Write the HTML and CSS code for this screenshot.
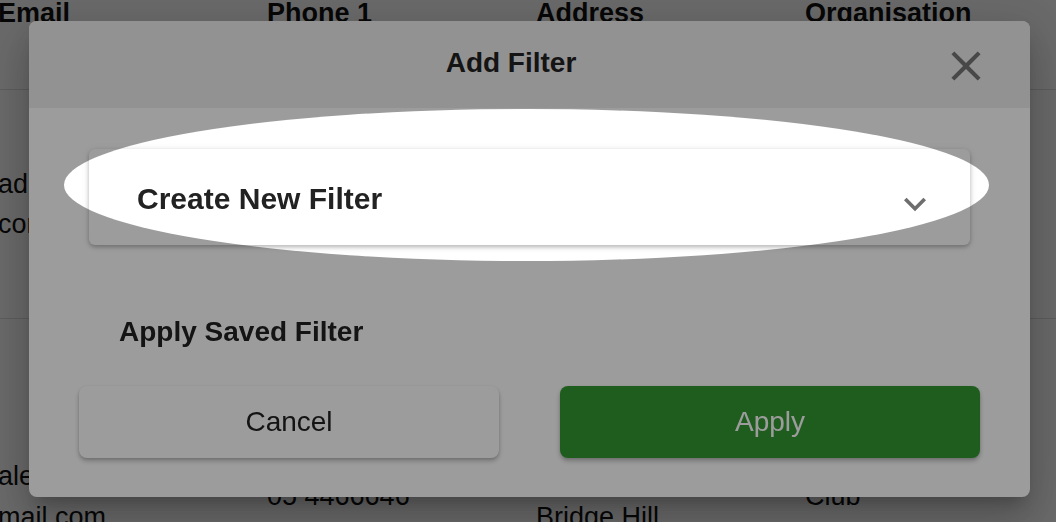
FILE: index.html
```html
<!DOCTYPE html>
<html lang="en">
  <head>
    <meta charset="UTF-8" />
    <meta name="viewport" content="width=device-width, initial-scale=1.0" />
    <title>Contacts</title>
    <link rel="stylesheet" href="styles.css">
  </head>

  <body>
    <table class="contacts">
      <thead>
        <tr>
          <th>Email</th>
          <th>Phone 1</th>
          <th>Address</th>
          <th>Organisation</th>
          <th>Notes</th>
        </tr>
      </thead>
      <tbody>
        <tr class="row-one">
          <td>admin@hillsbowls<br>com.au</td>
          <td>03 5442 1188</td>
          <td>14 Lake Rd<br>Kangaroo Flat<br>VIC 3555</td>
          <td>Kangaroo Flat<br>Bowling Club</td>
          <td></td>
        </tr>
        <tr class="row-two">
          <td>alex.smith@g<br>mail.com</td>
          <td>05 4466646</td>
          <td>Unit 4<br>22 Station St<br>Bridge Hill<br>VIC 3550</td>
          <td>Hillside Bowls<br>Club<br>Inc.</td>
          <td></td>
        </tr>
      </tbody>
    </table>

    <div class="backdrop">
      <div class="dialog">
        <div class="dialog-head">
          <div class="dialog-title">Add Filter</div>
          <svg class="close" viewBox="0 0 24 24">
            <path d="M19 6.41 17.59 5 12 10.59 6.41 5 5 6.41 10.59 12 5 17.59 6.41 19 12 13.41 17.59 19 19 17.59 13.41 12z" />
          </svg>
        </div>

        <div class="dialog-body">
          <div class="select-card">
            <span class="select-label">Create New Filter</span>
            <svg class="chevron" viewBox="0 0 24 24">
              <path d="M16.59 8.59 12 13.17 7.41 8.59 6 10l6 6 6-6z" />
            </svg>
          </div>

          <div class="saved-label">Apply Saved Filter</div>

          <div class="actions">
            <button class="btn btn-cancel">Cancel</button>
            <button class="btn btn-apply">Apply</button>
          </div>
        </div>

        <!-- tour spotlight -->
        <div class="spotlight"></div>
      </div>
    </div>
  </body>
</html>
```

FILE: styles.css
```css
body {
  margin: 0;
  background: white;
  font-family: "Liberation Sans", Arial, sans-serif;
  color: #111;
  overflow: hidden;
}

.contacts {
  border-collapse: collapse;
  table-layout: fixed;
  width: 1345px;
  margin-left: -2px;
  font-size: 27px;
}

.contacts th,
.contacts td {
  width: 269px;
  padding: 0;
  text-align: left;
  border-bottom: 1px solid #e0e0e0;
}

.contacts th {
  height: 89px;
  line-height: 27px;
  vertical-align: top;
  font-weight: bold;
}

.contacts td {
  line-height: 1.5;
  vertical-align: middle;
  white-space: nowrap;
}

.row-one td {
  height: 228px;
}

.row-two td {
  height: 355px;
}

.backdrop {
  position: fixed;
  inset: 0;
  background: rgba(0, 0, 0, 0.32);
  display: flex;
  align-items: flex-start;
  padding: 21px 0 0 29px;
}

.dialog {
  position: relative;
  width: 1001px;
  background: white;
  border-radius: 8px;
  box-shadow: 0 11px 15px -7px rgba(0, 0, 0, 0.2), 0 24px 38px 3px rgba(0, 0, 0, 0.14),
    0 9px 46px 8px rgba(0, 0, 0, 0.12);
}

.dialog-head {
  height: 87px;
  display: flex;
  align-items: center;
  padding: 0 39px 0 52px;
  background: #efefef;
  border-radius: 8px 8px 0 0;
}

.dialog-title {
  flex: 1;
  text-align: center;
  font-size: 28px;
  font-weight: bold;
  color: #222;
  margin-bottom: 4px;
}

.close {
  width: 50px;
  height: 50px;
  fill: #777;
  margin-top: 3px;
}

.dialog-body {
  padding: 41px 50px 39px;
}

.select-card {
  height: 96px;
  margin: 0 10px;
  display: flex;
  align-items: center;
  padding: 0 33px 0 48px;
  background: white;
  border-radius: 6px;
  box-shadow: 0 2px 4px rgba(0, 0, 0, 0.25), 0 1px 8px rgba(0, 0, 0, 0.08);
}

.select-label {
  flex: 1;
  font-size: 30px;
  font-weight: bold;
  color: #222;
  margin-top: 3px;
}

.chevron {
  width: 44px;
  height: 44px;
  fill: #6e6e6e;
  margin-top: 14px;
}

.saved-label {
  margin: 72px 0 0 40px;
  font-size: 28px;
  line-height: 30px;
  font-weight: bold;
  color: #222;
}

.actions {
  display: grid;
  grid-template-columns: 1fr 1fr;
  gap: 61px;
  margin-top: 39px;
}

.btn {
  height: 72px;
  border: none;
  border-radius: 8px;
  font-family: inherit;
  font-size: 28px;
  cursor: pointer;
  box-shadow: 0 3px 5px rgba(0, 0, 0, 0.25), 0 1px 3px rgba(0, 0, 0, 0.1);
}

.btn-cancel {
  background: white;
  color: #222;
}

.btn-apply {
  background: #339834;
  color: white;
}

.spotlight {
  position: absolute;
  left: 35px;
  top: 88px;
  width: 925px;
  height: 152px;
  border-radius: 50%;
  box-shadow: 0 0 0 3000px rgba(0, 0, 0, 0.39);
  pointer-events: none;
}
```
